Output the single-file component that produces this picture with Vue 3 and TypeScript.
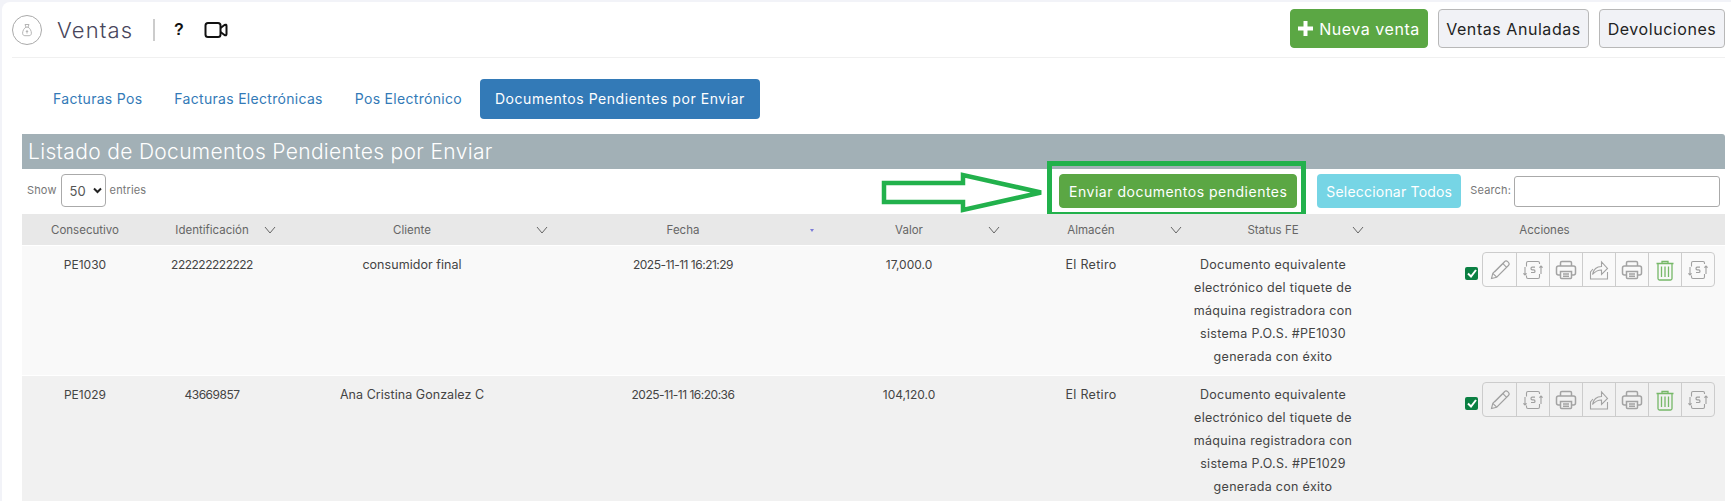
<script setup lang="ts">
interface Row { id: string; ident: string; client: string; date: string; value: string; status: string[] }
const tabs = ['Facturas Pos', 'Facturas Electrónicas', 'Pos Electrónico']
const cols = [
  { label: 'Consecutivo', chev: false },
  { label: 'Identificación', chev: true },
  { label: 'Cliente', chev: true },
  { label: 'Fecha', chev: false },
  { label: 'Valor', chev: true },
  { label: 'Almacén', chev: true },
  { label: 'Status FE', chev: true },
  { label: 'Acciones', chev: false },
]
const statusFor = (code: string): string[] => [
  'Documento equivalente',
  'electrónico del tiquete de',
  'máquina registradora con',
  `sistema P.O.S. #${code}`,
  'generada con éxito',
]
const rows: Row[] = [
  { id: 'PE1030', ident: '222222222222', client: 'consumidor final', date: '2025-11-11 16:21:29', value: '17,000.0', status: statusFor('PE1030') },
  { id: 'PE1029', ident: '43669857', client: 'Ana Cristina Gonzalez C', date: '2025-11-11 16:20:36', value: '104,120.0', status: statusFor('PE1029') },
]
const actions = ['pencil', 'doc', 'print', 'share', 'print', 'trash', 'doc']
</script>

<template>
  <div class="page">
    <header class="head">
      <div class="head-left">
        <span class="badge">
          <svg width="14" height="14" viewBox="0 0 14 14" fill="none" stroke="#b5b5b5" stroke-width="1">
            <path d="M5 1.500h4L8 4.200c2 1 3.400 3.600 3.400 6 0 1.800-1.200 2.500-2.400 2.500H5c-1.200 0-2.400-.7-2.400-2.500 0-2.400 1.400-5 3.400-6z" />
            <path d="M6 4.200h2M7 7v3.500M5.800 8.500h2.400" />
          </svg>
        </span>
        <h1 class="title">Ventas</h1>
        <span class="divider"></span>
        <span class="help">?</span>
        <svg class="video" width="24" height="18" viewBox="0 0 24 18" fill="none" stroke="#111" stroke-width="2">
          <rect x="1.500" y="2" width="15" height="14" rx="2.500" />
          <path d="M16.500 7l4-3q2-1 2 1v8q0 2-2 1l-4-3" stroke-linejoin="round" />
        </svg>
      </div>
      <div class="head-right">
        <button class="btn btn-green btn-new">
          <svg width="15" height="15" viewBox="0 0 15 15" fill="#fff"><path d="M5.500 0h4v5.500H15v4H9.500V15h-4V9.500H0v-4h5.500z" /></svg>
          Nueva venta
        </button>
        <button class="btn btn-light btn-anul">Ventas Anuladas</button>
        <button class="btn btn-light btn-dev">Devoluciones</button>
      </div>
    </header>

    <nav class="tabs">
      <a v-for="t in tabs" :key="t" class="tab">{{ t }}</a>
      <a class="tab tab-active">Documentos Pendientes por Enviar</a>
    </nav>

    <section class="panel">
      <h2 class="panel-title">Listado de Documentos Pendientes por Enviar</h2>

      <div class="toolbar">
        <div class="length">
          <span>Show</span>
          <span class="select">50
            <svg width="9" height="7" viewBox="0 0 9 7" fill="none" stroke="#222" stroke-width="2"><path d="M1 1.500l3.500 3.500L8 1.500" /></svg>
          </span>
          <span>entries</span>
        </div>
        <div class="tools">
          <span class="send-wrap">
            <button class="btn btn-green btn-send">Enviar documentos pendientes</button>
            <span class="mark"></span>
            <svg class="arrow" width="164" height="43" viewBox="0 0 164 43" fill="none" stroke="#22b14c" stroke-width="4.500">
              <path d="M3 12h79V4l78 17.500L82 39v-8H3z" />
            </svg>
          </span>
          <button class="btn btn-select">Seleccionar Todos</button>
          <label class="search">Search:<input class="search-input" type="text" /></label>
        </div>
      </div>

      <table class="grid">
        <colgroup>
          <col style="width: 126px" />
          <col style="width: 128px" />
          <col style="width: 272px" />
          <col style="width: 270px" />
          <col style="width: 182px" />
          <col style="width: 182px" />
          <col style="width: 182px" />
          <col />
        </colgroup>
        <thead>
          <tr>
            <th v-for="c in cols" :key="c.label">
              {{ c.label }}
              <svg v-if="c.chev" class="chev" width="12" height="8" viewBox="0 0 12 8" fill="none" stroke="#666" stroke-width="1"><path d="M1 1l5 6 5-6" /></svg>
              <span v-if="c.label === 'Fecha'" class="sort"></span>
            </th>
          </tr>
        </thead>
        <tbody>
          <tr v-for="r in rows" :key="r.id">
            <td>{{ r.id }}</td>
            <td class="num">{{ r.ident }}</td>
            <td class="client">{{ r.client }}</td>
            <td class="num">{{ r.date }}</td>
            <td>{{ r.value }}</td>
            <td class="wide">El Retiro</td>
            <td class="wide"><div v-for="l in r.status" :key="l">{{ l }}</div></td>
            <td class="act-cell">
              <div class="acts">
                <span class="check">
                  <svg width="10" height="9" viewBox="0 0 10 9" fill="none" stroke="#fff" stroke-width="2"><path d="M1 4.500l3 3L9 1" /></svg>
                </span>
                <div class="act-group">
                  <span v-for="(a, i) in actions" :key="i" class="act">
                    <svg v-if="a === 'pencil'" width="22" height="22" viewBox="0 0 22 22" fill="none" stroke="#a0a0a0" stroke-width="1.100">
                      <path d="M2.500 19.500l1.300-5.200L15.500 2.600c.9-.9 2.300-.9 3.200 0l.7.7c.9.9.9 2.300 0 3.200L7.700 18.200zM3.800 14.300l3.900 3.900M13.700 4.400l3.900 3.900M5.500 13l10-10" />
                    </svg>
                    <svg v-else-if="a === 'doc'" width="22" height="22" viewBox="0 0 22 22" fill="none" stroke="#a0a0a0" stroke-width="1.100">
                      <path d="M4.500 7.500V4q0-1.500 1.500-1.500h10q1.500 0 1.500 1.500v1M4.500 16.500V18q0 1.500 1.500 1.500h10q1.500 0 1.500-1.500v-3" />
                      <path d="M3 8v8M1.400 14.300L3 16l1.600-1.700M19 15V7M17.400 8.700L19 7l1.600 1.700" />
                      <path d="M13 8.200h-2.800q-1.200 0-1.200 1.300t1.200 1.400h1.600q1.200 0 1.200 1.300t-1.200 1.300H9" stroke-width="1.200" />
                    </svg>
                    <svg v-else-if="a === 'print'" width="22" height="22" viewBox="0 0 22 22" fill="none" stroke="#a3a3a3" stroke-width="1.500">
                      <path d="M5.500 7V3.800q0-1.300 1.300-1.300h8.400q1.300 0 1.300 1.300V7" />
                      <path d="M5.500 16H3.500q-2 0-2-2V9q0-2 2-2h15q2 0 2 2v5q0 2-2 2h-2" />
                      <path d="M5.500 12.500h11v6q0 1-1 1h-9q-1 0-1-1zM8 15h6M8 17.300h6" />
                    </svg>
                    <svg v-else-if="a === 'share'" width="22" height="22" viewBox="0 0 22 22" fill="none" stroke="#a3a3a3" stroke-width="1.100">
                      <path d="M5 10l-2.500 3v7h17v-7" />
                      <path d="M4.500 15.500c1-5 4.500-8 9-8V3l6 6.500-6 6v-4.500c-3.500 0-6.500 1.500-9 4.500z" />
                    </svg>
                    <svg v-else width="22" height="22" viewBox="0 0 22 22" fill="none" stroke="#76b868" stroke-width="1.300">
                      <path d="M2.500 4.500h17M8 4.500V2.500h6v2M4 4.500v15q0 1.500 1.500 1.500h11q1.500 0 1.500-1.500v-15M7.500 7.500v10.500M11 7.500v10.500M14.500 7.500v10.500" />
                    </svg>
                  </span>
                </div>
              </div>
            </td>
          </tr>
        </tbody>
      </table>
    </section>
  </div>
</template>

<style>
html, body { margin: 0; overflow: hidden; background: #f2f3f8; }
</style>

<style scoped>
.page {
  width: 1729px;
  height: 499px;
  margin: 2px 0 0 2px;
  padding: 0 6px 0 20px;
  box-sizing: border-box;
  background: #fff;
  border-top-left-radius: 8px;
  overflow: hidden;
  font-family: Inter, "Noto Sans", sans-serif;
  color: #555;
}
.head {
  display: flex;
  justify-content: space-between;
  height: 56px;
  margin-left: -10px;
  border-bottom: 1px solid #f0f0f0;
  box-sizing: border-box;
}
.head-left { display: flex; align-items: center; }
.badge {
  width: 30px; height: 30px; border: 1px solid #aaa; border-radius: 50%;
  display: flex; align-items: center; justify-content: center; box-sizing: border-box;
}
.title { margin: 0 0 0 15px; font-size: 22px; font-weight: 300; color: #48465b; letter-spacing: 1.100px; width: 81px; white-space: nowrap; }
.divider { width: 2px; height: 22px; background: #ccc; margin: 0 19px 0 15px; }
.help { font-weight: 700; font-size: 16px; color: #111; font-family: "Liberation Sans", sans-serif; }
.video { margin-left: 20px; }
.head-right { display: flex; gap: 10px; padding-top: 7px; }
.btn {
  height: 39px; border-radius: 4px; font: inherit; font-size: 16px; letter-spacing: .55px; cursor: pointer; padding: 0; box-sizing: border-box;
  display: flex; align-items: center; justify-content: center; white-space: nowrap;
}
.btn-green { background: #5ba744; border: 1px solid #5ba744; color: #fff; }
.btn-new { width: 138px; gap: 6px; }
.btn-light { background: #f1f2f6; border: 1px solid #b8b8b8; color: #222; }
.btn-anul { width: 151px; }
.btn-dev { width: 126px; }

.tabs { display: flex; align-items: center; height: 40px; margin-top: 21px; font-size: 14px; }
.tab { color: #337ab7; padding: 0 16px; line-height: 40px; letter-spacing: .3px; white-space: nowrap; }
.tabs .tab:first-child { padding-left: 31px; }
.tab-active { background: #337ab7; color: #fff; border-radius: 4px; width: 280px; box-sizing: border-box; text-align: center; padding: 0; margin-left: 2px; letter-spacing: .55px; }

.panel { margin-top: 15px; }
.panel-title {
  margin: 0; height: 35px; line-height: 35px; background: #a2b0b6; color: #fff;
  font-size: 21px; font-weight: 300; letter-spacing: .33px; padding-left: 6px; border-top-right-radius: 3px;
}
.toolbar { display: flex; justify-content: space-between; height: 45px; padding-top: 5px; box-sizing: border-box; font-size: 11px; color: #777; letter-spacing: .15px; }
.length { display: flex; align-items: flex-start; gap: 4px; line-height: 32px; padding-left: 5px; }
.select {
  width: 45px; height: 33px; border: 1px solid #aaa; border-radius: 4px; box-sizing: border-box;
  display: flex; align-items: center; gap: 7px; padding-left: 8px; font-size: 13px; color: #555;
}
.tools { display: flex; align-items: flex-start; }
.send-wrap { position: relative; display: block; margin-left: 1px; }
.btn-send { width: 238px; height: 34px; font-size: 14px; letter-spacing: .5px; }
.mark { position: absolute; left: -12px; top: -13px; width: 259px; height: 56px; border: 5px solid #22b14c; box-sizing: border-box; }
.arrow { position: absolute; left: -178px; top: -3px; }
.btn-select { width: 144px; height: 34px; margin-left: 20px; background: #76d5e5; border: 0; color: #fff; font-size: 14px; letter-spacing: .2px; }
.search { display: flex; align-items: flex-start; margin-left: 9px; line-height: 32px; margin-right: 5px; gap: 3px; }
.search-input { width: 206px; height: 31px; margin-top: 2px; border: 1px solid #aaa; border-radius: 3px; box-sizing: border-box; padding: 0; }

.grid { width: 100%; table-layout: fixed; border-collapse: collapse; font-size: 12px; }
th { position: relative; height: 31px; padding: 0; background: #e8e8e8; font-weight: 400; color: #666; font-size: 11.500px; }
.chev { position: absolute; right: 0; top: 12px; }
.sort { position: absolute; right: 4px; top: 15px; border: 2.500px solid transparent; border-top: 3.500px solid #7b7bd8; }
td { padding: 7px 0; line-height: 23px; text-align: center; vertical-align: top; color: #444; border-top: 1px solid #fff; }
td.num { letter-spacing: -.5px; }
td.client { font-size: 12.500px; letter-spacing: .05px; }
td.wide { font-size: 12.500px; letter-spacing: .3px; }
td > div { white-space: nowrap; }
tbody tr:nth-child(odd) td { background: #f9f9f9; }
tbody tr:nth-child(even) td { background: #f1f1f1; }
td.act-cell { padding: 6px 10px 0 0; }
.acts { display: flex; align-items: center; justify-content: flex-end; gap: 4px; }
.check { width: 13px; height: 13px; margin-top: 8px; background: #0b8043; border-radius: 2px; display: flex; align-items: center; justify-content: center; }
.act-group { display: flex; height: 35px; border: 1px solid #ccc; border-radius: 4px; box-sizing: border-box; }
.act { width: 33px; display: flex; align-items: center; justify-content: center; border-left: 1px solid #ccc; box-sizing: border-box; }
.act:first-child { border-left: 0; }
</style>
